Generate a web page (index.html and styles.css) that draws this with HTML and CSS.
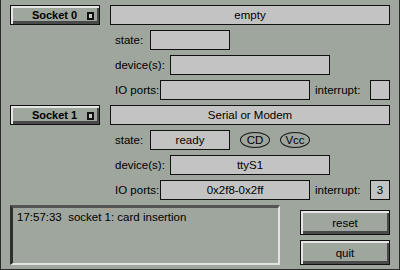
FILE: index.html
```html
<!DOCTYPE html>
<html>
<head>
<meta charset="utf-8">
<link rel="stylesheet" href="styles.css">
</head>
<body>
<div class="window">
  <div class="socket">
    <div class="head">
      <div class="sockbtn"><span class="sockname">Socket 0</span><span class="ind"></span></div>
      <div class="field wide">empty</div>
    </div>
    <div class="row">
      <span class="lbl l-state">state:</span>
      <div class="field w-state"></div>
    </div>
    <div class="row">
      <span class="lbl l-dev">device(s):</span>
      <div class="field w-dev"></div>
    </div>
    <div class="row">
      <span class="lbl l-io">IO ports:</span>
      <div class="field w-io"></div>
      <span class="lbl l-irq">interrupt:</span>
      <div class="field w-irq"></div>
    </div>
  </div>

  <div class="socket">
    <div class="head">
      <div class="sockbtn"><span class="sockname">Socket 1</span><span class="ind"></span></div>
      <div class="field wide">Serial or Modem</div>
    </div>
    <div class="row">
      <span class="lbl l-state">state:</span>
      <div class="field w-state">ready</div>
      <span class="oval">CD</span>
      <span class="oval">Vcc</span>
    </div>
    <div class="row">
      <span class="lbl l-dev">device(s):</span>
      <div class="field w-dev">ttyS1</div>
    </div>
    <div class="row">
      <span class="lbl l-io">IO ports:</span>
      <div class="field w-io">0x2f8-0x2ff</div>
      <span class="lbl l-irq">interrupt:</span>
      <div class="field w-irq">3</div>
    </div>
  </div>

  <div class="bottom">
    <div class="log">17:57:33  socket 1: card insertion</div>
    <div class="actions">
      <div class="btn">reset</div>
      <div class="btn">quit</div>
    </div>
  </div>
</div>
</body>
</html>
```

FILE: styles.css
```css
html, body {
  margin: 0;
  padding: 0;
  background: #9ea69e;
}
.window {
  box-sizing: border-box;
  width: 400px;
  height: 270px;
  border-left: 1px solid #2a2a2a;
  border-right: 1px solid #2a2a2a;
  border-bottom: 1px solid #2a2a2a;
  padding: 5px 9px 0 9px;
  display: flex;
  flex-direction: column;
  gap: 5px;
  font-family: "Liberation Sans", Arial, sans-serif;
  font-size: 11.5px;
  color: #000;
}
.socket {
  display: flex;
  flex-direction: column;
  gap: 5px;
}
.head {
  display: flex;
  gap: 10px;
  height: 20px;
}
.sockbtn {
  position: relative;
  box-sizing: border-box;
  width: 90px;
  height: 20px;
  border: 1px solid #111;
  box-shadow: inset 2px 2px 0 #e6e6e6, inset -2px -3px 0 #4a4a4a;
  display: flex;
  align-items: center;
  justify-content: center;
  font-weight: bold;
  font-size: 11px;
}
.sockname {
  margin-left: -1px;
}
.ind {
  position: absolute;
  right: 5px;
  top: 6px;
  box-sizing: border-box;
  width: 7px;
  height: 8px;
  border: 2px solid #111;
  background: #c8c8c8;
}
.field {
  box-sizing: border-box;
  height: 20px;
  border: 1.5px solid #111;
  background: #c3c3c3;
  display: flex;
  align-items: center;
  justify-content: center;
}
.wide { flex: 1; }
.row {
  display: flex;
  align-items: center;
  height: 20px;
  padding-left: 105px;
}
.lbl { display: inline-block; }
.l-state { width: 35px; }
.l-dev { width: 55px; }
.l-io { width: 45px; }
.l-irq { width: 55px; margin-left: 5px; }
.w-state { width: 80px; }
.w-dev { width: 160px; }
.w-io { width: 150px; }
.w-irq { width: 20px; }
.oval {
  box-sizing: border-box;
  width: 30px;
  height: 16px;
  border: 1.5px solid #111;
  border-radius: 50%;
  display: flex;
  align-items: center;
  justify-content: center;
  margin-left: 10px;
}
.bottom {
  display: flex;
  gap: 20px;
}
.log {
  box-sizing: border-box;
  width: 270px;
  height: 60px;
  border-style: solid;
  border-width: 3px 2px 2px 3px;
  border-color: #555 #e2e2e2 #e2e2e2 #2e2e2e;
  padding: 2px 4px;
  white-space: pre;
  line-height: 14px;
}
.actions {
  width: 90px;
  display: flex;
  flex-direction: column;
  gap: 5px;
  padding-top: 5px;
}
.btn {
  box-sizing: border-box;
  height: 25px;
  border: 1px solid #111;
  box-shadow: inset 2px 2px 0 #e6e6e6, inset -2px -3px 0 #4a4a4a;
  display: flex;
  align-items: center;
  justify-content: center;
}
```
